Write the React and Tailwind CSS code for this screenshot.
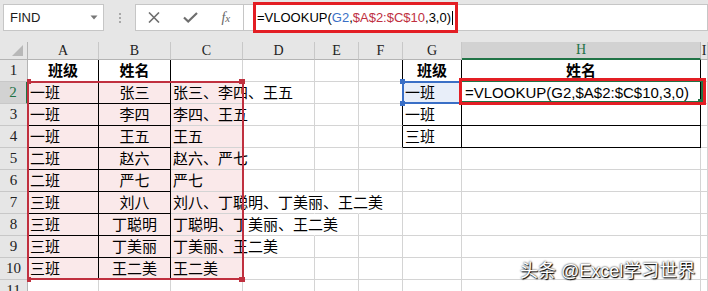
import React from 'react';

const FORMULA = '=VLOOKUP(G2,$A$2:$C$10,3,0)';

const DATA = [
  ['一班', '张三', '张三、李四、王五'],
  ['一班', '李四', '李四、王五'],
  ['一班', '王五', '王五'],
  ['二班', '赵六', '赵六、严七'],
  ['二班', '严七', '严七'],
  ['三班', '刘八', '刘八、丁聪明、丁美丽、王二美'],
  ['三班', '丁聪明', '丁聪明、丁美丽、王二美'],
  ['三班', '丁美丽', '丁美丽、王二美'],
  ['三班', '王二美', '王二美'],
];

const LETTERS = ['A', 'B', 'C', 'D', 'E', 'F', 'G', 'H', 'I'];

function Cell({ r, c }) {
  const L = LETTERS[c];
  let text = '';
  let center = false;
  let bold = false;
  if (r === 1) {
    if (L === 'A' || L === 'G') { text = '班级'; center = true; bold = true; }
    if (L === 'B' || L === 'H') { text = '姓名'; center = true; bold = true; }
  } else if (r <= 10) {
    const d = DATA[r - 2];
    if (L === 'A') text = d[0];
    if (L === 'B') { text = d[1]; center = true; }
    if (L === 'C') text = d[2];
  }
  if (L === 'G' && r >= 2 && r <= 4) text = ['一班', '一班', '三班'][r - 2];
  const isFormula = L === 'H' && r === 2;
  if (isFormula) text = FORMULA;

  const blackR = ((L === 'A' || L === 'B') && r <= 10) || ((L === 'F' || L === 'G' || L === 'H') && r <= 4);
  const blackB = ((L === 'A' || L === 'B') && r <= 10) || ((L === 'G' || L === 'H') && r <= 4);
  const hideR = (L === 'C' && [2, 3, 5, 7, 8, 9].includes(r)) || (L === 'D' && (r === 7 || r === 8)) || (L === 'E' && r === 7);
  const pink = r >= 2 && r <= 10 && c <= 2;
  const blue = L === 'G' && r === 2;

  const cls = [
    'flex items-center border-r border-b whitespace-nowrap min-w-0',
    blackR ? 'border-r-black' : hideR ? 'border-r-transparent' : 'border-r-[#d4d4d4]',
    blackB ? 'border-b-black' : 'border-b-[#d4d4d4]',
    pink ? 'bg-[#fae9ea]' : blue ? 'bg-[#e8eef9]' : '',
    center ? 'justify-center' : isFormula ? 'pl-[3px]' : 'pl-[2px]',
    bold ? 'font-bold' : '',
  ].join(' ');

  return (
    <div className={cls}>
      {text ? (
        <span className={isFormula ? "leading-none text-[15px] text-black font-['Liberation_Sans',sans-serif]" : "leading-none text-[15px] text-black"}>
          {text}
        </span>
      ) : null}
    </div>
  );
}

function ColHeader({ L }) {
  const sel = L === 'H';
  return (
    <div
      className={
        sel
          ? "flex items-center justify-center bg-[#d2d2d2] border-r border-r-[#b8b8b8] border-b-2 border-b-[#217346] text-[#217346] text-[14px] leading-none font-['Liberation_Serif',serif]"
          : "flex items-center justify-center bg-[#e6e6e6] border-r border-r-[#c8c8c8] border-b border-b-[#b4b4b4] text-[#222] text-[14px] leading-none font-['Liberation_Serif',serif]"
      }
    >
      {L}
    </div>
  );
}

function RowHeader({ n }) {
  const sel = n === 2;
  return (
    <div
      className={
        sel
          ? "flex items-center justify-center bg-[#d2d2d2] border-r-2 border-r-[#217346] border-b border-b-[#c8c8c8] text-[#217346] text-[15px] leading-none font-['Liberation_Serif',serif]"
          : "flex items-center justify-center bg-[#e6e6e6] border-r border-r-[#b4b4b4] border-b border-b-[#c8c8c8] text-[#222] text-[15px] leading-none font-['Liberation_Serif',serif]"
      }
    >
      {n}
    </div>
  );
}

export default function App() {
  const rows = [];
  for (let r = 1; r <= 11; r++) {
    rows.push(<RowHeader key={'h' + r} n={r} />);
    for (let c = 0; c < 9; c++) rows.push(<Cell key={r + '-' + c} r={r} c={c} />);
  }

  return (
    <div className="relative w-[708px] h-[291px] overflow-hidden bg-white font-['Liberation_Sans','Noto_Sans_CJK_SC',sans-serif]">
      {/* Formula bar */}
      <div className="relative h-[42px] bg-[#e6e6e6]">
        <div className="flex pt-[4px]">
          <div className="ml-[3px] w-[101px] h-[27px] bg-white border border-[#c6c6c6] flex items-center justify-between pl-[6px] pr-[5px]">
            <span className="text-[13px] text-[#1b1b1b] leading-none">FIND</span>
            <svg width="8" height="5" viewBox="0 0 8 5">
              <path d="M0.5 0.5 L7.5 0.5 L4 4.5 Z" fill="#777" />
            </svg>
          </div>
          <div className="w-[31px] flex flex-col items-center pt-[9px] gap-[2px]">
            <div className="w-[2px] h-[2px] bg-[#a8a8a8]" />
            <div className="w-[2px] h-[2px] bg-[#a8a8a8]" />
            <div className="w-[2px] h-[2px] bg-[#a8a8a8]" />
          </div>
          <div className="w-[109px] h-[27px] bg-white border border-[#c6c6c6] flex items-center">
            <div className="w-[37px] flex justify-center">
              <svg width="12" height="11" viewBox="0 0 12 11">
                <path d="M1 0.5 L11 10.5 M11 0.5 L1 10.5" stroke="#6e6e6e" strokeWidth="1.6" />
              </svg>
            </div>
            <div className="w-[37px] flex justify-center">
              <svg width="15" height="11" viewBox="0 0 15 11">
                <path d="M1 5.5 L5.2 9.5 L14 1" stroke="#6e6e6e" strokeWidth="2.2" fill="none" />
              </svg>
            </div>
            <div className="w-[35px] flex justify-center">
              <span className="italic font-['Liberation_Serif',serif] text-[14px] text-[#666] leading-none">
                f<span className="text-[11px]">x</span>
              </span>
            </div>
          </div>
          <div className="flex-1 -ml-[1px] h-[27px] bg-white border border-[#c6c6c6] flex items-center pl-[13px]">
            <span className="text-[13px] leading-none text-black whitespace-nowrap">
              =VLOOKUP(<span className="text-[#3a6fc6]">G2</span>,<span className="text-[#c0303f]">$A$2:$C$10</span>,3,0)
            </span>
            <div className="ml-[1px] w-[1px] h-[14px] bg-black" />
          </div>
        </div>
        <div className="absolute left-[253px] top-[2px] w-[205px] h-[31px] border-[3px] border-[#e31e24]" />
      </div>

      {/* Grid */}
      <div className="relative">
        <div className="grid grid-cols-[28px_71px_72px_72px_72px_44px_44px_59px_239px_1fr] grid-rows-[18px_repeat(11,22px)]">
          <div className="relative bg-[#e6e6e6] border-r border-r-[#b4b4b4] border-b border-b-[#b4b4b4]">
            <svg className="absolute left-[12px] top-[3px]" width="12" height="12" viewBox="0 0 12 12">
              <path d="M11 0 L11 11 L0 11 Z" fill="#b8b8b8" />
            </svg>
          </div>
          {LETTERS.map((L) => (
            <ColHeader key={L} L={L} />
          ))}
          {rows}
        </div>

        {/* Range A2:C10 (red) */}
        <div className="absolute left-[27px] top-[39px] w-[217px] h-[199px] border-2 border-[#c0303f]" />
        <div className="absolute left-[27px] top-[37px] w-[4px] h-[5px] bg-[#c0303f]" />
        <div className="absolute left-[239px] top-[37px] w-[6px] h-[5px] bg-[#c0303f]" />
        <div className="absolute left-[27px] top-[235px] w-[4px] h-[5px] bg-[#c0303f]" />
        <div className="absolute left-[239px] top-[235px] w-[6px] h-[5px] bg-[#c0303f]" />

        {/* G2 reference (blue) */}
        <div className="absolute left-[402px] top-[39px] w-[60px] h-[23px] border-2 border-[#3a6fc6]" />
        <div className="absolute left-[400px] top-[37px] w-[5px] h-[5px] bg-[#3a6fc6]" />
        <div className="absolute left-[400px] top-[59px] w-[5px] h-[5px] bg-[#3a6fc6]" />

        {/* Active cell H2 (green) */}
        <div className="absolute left-[460px] top-[38px] w-[243px] h-[23px] border-2 border-[#217346]" />
        <div className="absolute left-[698px] top-[57px] w-[5px] h-[5px] bg-[#217346]" />

        {/* Annotation box around H2 */}
        <div className="absolute left-[459px] top-[36px] w-[247px] h-[27px] border-[3px] border-[#e31e24]" />
      </div>

      {/* Watermark */}
      <div className="absolute left-[520px] top-[262px] text-[18px] leading-none whitespace-nowrap text-white [text-shadow:0_0_2px_#000,1px_1px_1px_#000]">
        头条 @Excel学习世界
      </div>
    </div>
  );
}
